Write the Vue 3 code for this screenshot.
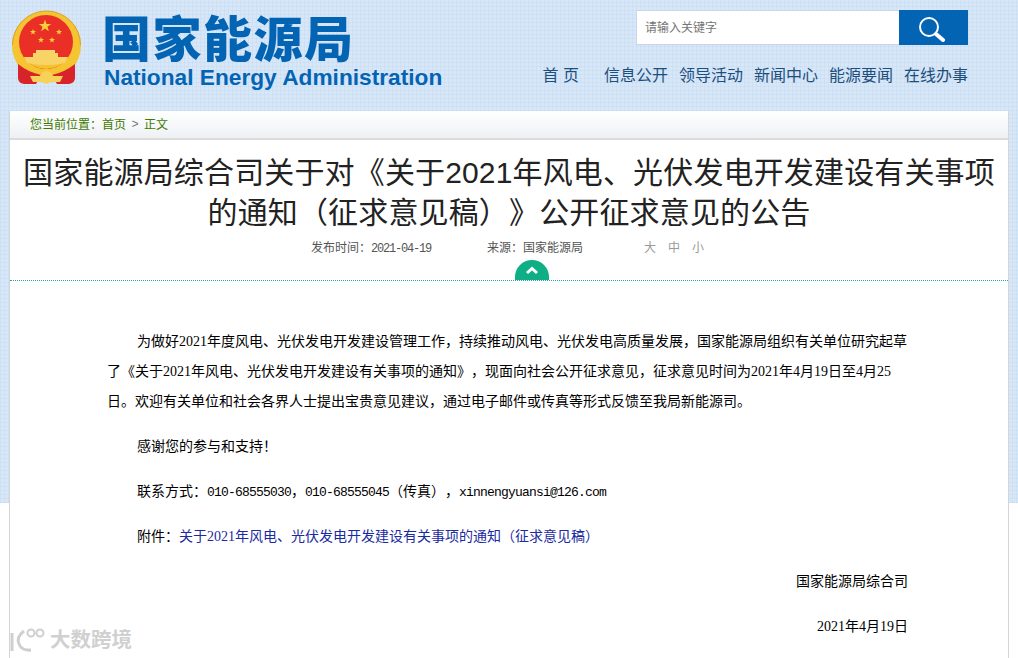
<template>
    <div class="page">
        <header class="head">
            <svg class="emblem" width="72" height="76" viewBox="11 10 72 76">
                <circle cx="46.5" cy="45.5" r="34.5" fill="#f4c431" />
                <path d="M12.5 45 A34 34 0 0 1 80.5 45" fill="none" stroke="#dc9f25" stroke-width="1" />
                <circle cx="46" cy="42" r="27" fill="#ea3026" />
                <path d="M23.6 57 H68.4 A27 27 0 0 1 23.6 57 Z" fill="#f5c234" />
                <path d="M18 64 Q28 72 41 75 L36 84 L24 84 Q18 83 18 78 Z" fill="#d9232a" />
                <path d="M75 64 Q65 72 52 75 L57 84 L69 84 Q75 83 75 78 Z" fill="#d9232a" />
                <polygon v-for="s in stars" :key="s.x + '-' + s.y" :points="starPoints(s)" fill="#f8d03a" />
                <path d="M36 50 H55 V53 H58 V57 H68 L65 63 Q46 67 27 63 L24 57 H33 V53 H36 Z" fill="#f8d466" />
                <path d="M30 76 H40 Q42 71 46.5 71 Q51 71 53 76 H63 L60 82 H52 L46.5 84 L41 82 H33 Z" fill="#f7d25b" />
            </svg>
            <div class="brand">
                <div class="brand-cn">国家能源局</div>
                <div class="brand-en">National Energy Administration</div>
            </div>
            <div class="head-right">
                <div class="search">
                    <div class="search-input">请输入关键字</div>
                    <div class="search-btn">
                        <svg width="30" height="28" viewBox="0 0 30 28">
                            <circle cx="10" cy="13" r="9" fill="none" stroke="#fff" stroke-width="2" />
                            <path d="M17 20 L24 26" stroke="#fff" stroke-width="4" stroke-linecap="round" />
                        </svg>
                    </div>
                </div>
                <nav class="nav">
                    <a class="nav-home">首 页</a>
                    <a v-for="item in navItems" :key="item">{{ item }}</a>
                </nav>
            </div>
        </header>

        <main class="card">
            <div class="crumb">
                <span>您当前位置：</span><span>首页</span><span class="crumb-sep">&gt;</span><span>正文</span>
            </div>
            <div class="article">
                <h1 class="title">国家能源局综合司关于对《关于2021年风电、光伏发电开发建设有关事项的通知（征求意见稿）》公开征求意见的公告</h1>
                <div class="meta">
                    <span class="meta-date">发布时间：<i>2021-04-19</i></span>
                    <span class="meta-src">来源：国家能源局</span>
                    <span class="meta-size"><b>大</b><b>中</b><b>小</b></span>
                </div>
                <div class="divider">
                    <span class="up">
                        <svg width="14" height="10" viewBox="0 0 14 10">
                            <path d="M2 8 L7 3.5 L12 8" fill="none" stroke="#fff" stroke-width="3" />
                        </svg>
                    </span>
                </div>
                <div class="content">
                    <p class="indent">为做好2021年度风电、光伏发电开发建设管理工作，持续推动风电、光伏发电高质量发展，国家能源局组织有关单位研究起草了《关于2021年风电、光伏发电开发建设有关事项的通知》，现面向社会公开征求意见，征求意见时间为2021年4月19日至4月25日。欢迎有关单位和社会各界人士提出宝贵意见建议，通过电子邮件或传真等形式反馈至我局新能源司。</p>
                    <p class="indent">感谢您的参与和支持！</p>
                    <p class="indent">联系方式：<span class="mono">010-68555030</span>，<span class="mono">010-68555045</span>（传真），<span class="mono">xinnengyuansi@126.com</span></p>
                    <p class="indent">附件：<a class="attach">关于2021年风电、光伏发电开发建设有关事项的通知（征求意见稿）</a></p>
                    <p class="sign">国家能源局综合司</p>
                    <p class="sign">2021年4月19日</p>
                </div>
            </div>
        </main>

        <div class="watermark">
            <svg width="38" height="26" viewBox="0 0 38 26">
                <g fill="none" stroke="#cfcfcf" stroke-width="3">
                    <path d="M3 6 V24" />
                    <path d="M15 4 Q7 10 10 17 Q13 24 22 23" />
                    <circle cx="22" cy="6" r="3.5" stroke-width="2" />
                    <circle cx="31" cy="6" r="3.5" stroke-width="2" />
                </g>
            </svg>
            <span>大数跨境</span>
        </div>
    </div>
</template>

<script setup>
const navItems = ['信息公开', '领导活动', '新闻中心', '能源要闻', '在线办事']

const stars = [
    { x: 45, y: 26, r: 6.5 },
    { x: 33, y: 32, r: 3.2 },
    { x: 59, y: 32, r: 3.2 },
    { x: 41, y: 40, r: 3.2 },
    { x: 52, y: 40, r: 3.2 }
]

// 五角星顶点
function starPoints(s) {
    const pts = []
    for (let i = 0; i < 10; i++) {
        const r = i % 2 ? s.r * 0.4 : s.r
        const a = -Math.PI / 2 + (i * Math.PI) / 5
        pts.push(`${(s.x + r * Math.cos(a)).toFixed(2)},${(s.y + r * Math.sin(a)).toFixed(2)}`)
    }
    return pts.join(' ')
}
</script>

<style>
html,
body {
    margin: 0;
    overflow: hidden;
}
</style>

<style scoped>
.page {
    position: relative;
    height: 658px;
    overflow: hidden;
    font-family: "Liberation Sans", "Noto Sans CJK SC", sans-serif;
    text-spacing-trim: space-all;
    background-color: #fff;
    background-image:
        repeating-linear-gradient(0deg, rgba(190, 214, 240, 0.35) 0 1px, transparent 1px 4px),
        repeating-linear-gradient(90deg, rgba(190, 214, 240, 0.35) 0 1px, transparent 1px 4px),
        linear-gradient(#d7e7f8, #d7e7f8);
    background-size: 100% 503px;
    background-repeat: no-repeat;
}

/* 顶部 */
.head {
    display: flex;
    height: 111px;
    box-sizing: border-box;
    padding: 10px 50px 0 11px;
}

.emblem {
    display: block;
}

.brand {
    margin-left: 21px;
    color: #0464b4;
}

.brand-cn {
    margin-left: -2px;
    font-size: 49px;
    font-weight: 900;
    line-height: 52px;
    letter-spacing: 1.5px;
    font-family: "Noto Sans CJK SC", sans-serif;
}

.brand-en {
    margin-top: 3px;
    font-size: 22.7px;
    font-weight: 700;
    line-height: 24px;
}

.head-right {
    margin-left: auto;
    display: flex;
    flex-direction: column;
    align-items: flex-end;
}

.search {
    display: flex;
    width: 332px;
    height: 35px;
}

.search-input {
    flex: 1;
    box-sizing: border-box;
    padding-left: 8px;
    background: #fff;
    border: 1px solid #cbd6e2;
    border-right: 0;
    font-size: 12px;
    line-height: 35px;
    color: #757575;
}

.search-btn {
    width: 69px;
    background: #0464b4;
    display: flex;
    align-items: center;
    justify-content: center;
}

.nav {
    display: flex;
    gap: 11px;
    margin-top: 20px;
    font-size: 16px;
    line-height: 22px;
    color: #1d4f7c;
}

.nav-home {
    margin-right: 14px;
}

/* 主体 */
.card {
    margin: 0 9px;
    border-left: 1px solid #d5d5d5;
    border-right: 1px solid #d5d5d5;
    height: 547px;
    background: #fff;
}

.crumb {
    height: 29px;
    box-sizing: border-box;
    padding-left: 20px;
    background: linear-gradient(#fff, #eef1f4);
    border-bottom: 2px solid #dcdcdc;
    font-size: 12px;
    line-height: 28px;
    color: #3f7a00;
    display: flex;
}

.crumb-sep {
    width: 18px;
    text-align: center;
    font-family: "Liberation Mono", monospace;
    color: #777;
}

.title {
    margin: 13px 0 0;
    padding: 0 10px;
    font-size: 30px;
    font-weight: 400;
    line-height: 40px;
    letter-spacing: 0.15px;
    text-align: center;
    color: #222;
}

.meta {
    position: relative;
    display: flex;
    height: 18px;
    margin-top: 6px;
    padding-left: 301px;
    font-size: 12px;
    line-height: 18px;
    color: #555;
}

.meta i {
    font-style: normal;
    font-family: "Liberation Mono", monospace;
    font-size: 12px;
    letter-spacing: -1.2px;
}

.meta-src {
    margin-left: 56px;
}

.meta-size {
    display: flex;
    gap: 12px;
    margin-left: 61px;
    color: #999;
}

.meta-size b {
    font-weight: 400;
}

.divider {
    position: relative;
    height: 23px;
    border-bottom: 1px dotted #2aa3a3;
}

.up {
    position: absolute;
    left: 505px;
    bottom: 0;
    width: 34px;
    height: 20px;
    background: #0faf85;
    border-radius: 17px 17px 0 0;
    display: flex;
    justify-content: center;
    padding-top: 5px;
    box-sizing: border-box;
}

.content {
    padding: 46px 100px 0 97px;
    font-family: "Liberation Serif", "Noto Sans CJK SC", serif;
    font-size: 14px;
    line-height: 30px;
    color: #000;
}

.content p {
    margin: 0 0 15px;
}

.indent {
    text-indent: 30px;
}

.mono {
    font-family: "Liberation Mono", monospace;
    font-size: 13px;
    letter-spacing: -0.8px;
    line-height: 1;
}

.attach {
    color: #1a2aa0;
}

.sign {
    text-align: right;
}

/* 水印 */
.watermark {
    position: absolute;
    left: 9px;
    top: 627px;
    display: flex;
    align-items: center;
    gap: 3px;
    font-size: 20.5px;
    line-height: 26px;
    font-weight: 700;
    color: #d0d0d0;
    text-shadow: 0 0 1px #fff;
}
</style>
